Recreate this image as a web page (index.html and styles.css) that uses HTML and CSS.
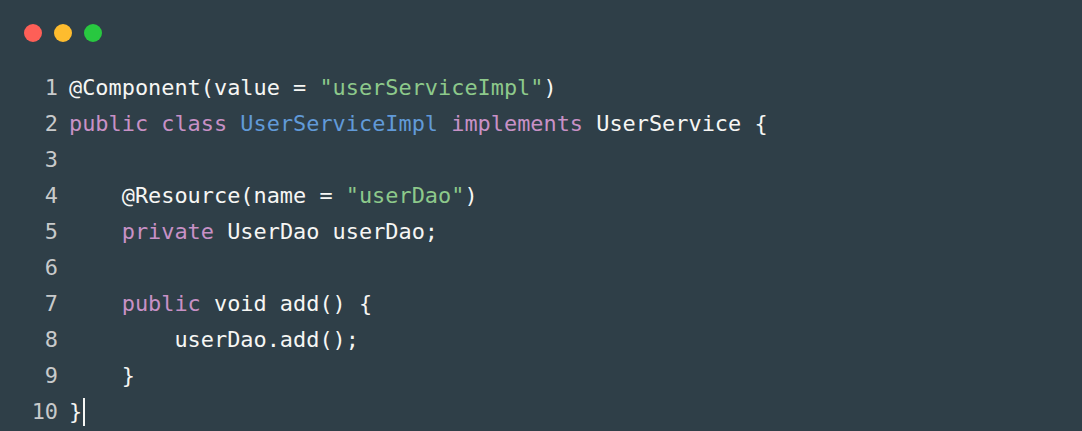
FILE: index.html
```html
<!DOCTYPE html>
<html>
<head>
<meta charset="utf-8">
<link rel="stylesheet" href="styles.css">
</head>
<body>
<div class="window">
  <div class="dots">
    <span class="dot red"></span>
    <span class="dot yellow"></span>
    <span class="dot green"></span>
  </div>
  <div class="code">
    <div class="line"><span class="ln">1</span><span class="src">@Component(value = <span class="str">"userServiceImpl"</span>)</span></div>
    <div class="line"><span class="ln">2</span><span class="src"><span class="kw">public</span> <span class="kw">class</span> <span class="cls">UserServiceImpl</span> <span class="kw">implements</span> UserService {</span></div>
    <div class="line"><span class="ln">3</span><span class="src"></span></div>
    <div class="line"><span class="ln">4</span><span class="src">    @Resource(name = <span class="str">"userDao"</span>)</span></div>
    <div class="line"><span class="ln">5</span><span class="src">    <span class="kw">private</span> UserDao userDao;</span></div>
    <div class="line"><span class="ln">6</span><span class="src"></span></div>
    <div class="line"><span class="ln">7</span><span class="src">    <span class="kw">public</span> void add() {</span></div>
    <div class="line"><span class="ln">8</span><span class="src">        userDao.add();</span></div>
    <div class="line"><span class="ln">9</span><span class="src">    }</span></div>
    <div class="line"><span class="ln">10</span><span class="src">}<span class="cursor"></span></span></div>
  </div>
</div>
</body>
</html>
```
FILE: styles.css
```css
html, body {
  margin: 0;
  padding: 0;
  background: #2f3f48;
  height: 100%;
}
.window {
  background: #2f3f48;
  padding: 24px 0 0 0;
}
.dots {
  display: flex;
  gap: 12px;
  padding-left: 24px;
  height: 18px;
}
.dot {
  width: 18px;
  height: 18px;
  border-radius: 50%;
  display: block;
}
.red { background: #fe5f57; }
.yellow { background: #febc2e; }
.green { background: #28c840; }
.code {
  margin-top: 28px;
  font-family: "DejaVu Sans Mono", "Liberation Mono", monospace;
  font-size: 21.9px;
  line-height: 36px;
  color: #f6f6f4;
}
.line {
  display: grid;
  grid-template-columns: 27px 1fr;
  column-gap: 11px;
  padding-left: 31px;
  height: 36px;
}
.ln {
  text-align: right;
  color: #c8cacb;
}
.src {
  white-space: pre;
}
.kw { color: #c891c6; }
.cls { color: #619ad8; }
.str { color: #8dc98b; }
.cursor {
  display: inline-block;
  width: 2px;
  height: 28px;
  background: #f6f6f4;
  vertical-align: -7px;
  margin-left: 1px;
}
```
